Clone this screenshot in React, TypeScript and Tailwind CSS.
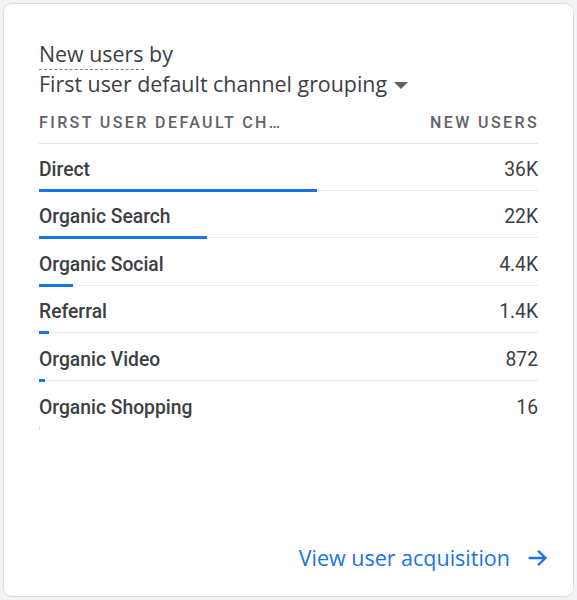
import React from "react";

const rows = [
  { name: "Direct", value: "36K", w: 278 },
  { name: "Organic Search", value: "22K", w: 168 },
  { name: "Organic Social", value: "4.4K", w: 34 },
  { name: "Referral", value: "1.4K", w: 10 },
  { name: "Organic Video", value: "872", w: 6 },
  { name: "Organic Shopping", value: "16", w: 1 },
];

const sans = { fontFamily: "'Open Sans', Roboto, sans-serif" };

export default function App() {
  return (
    <div className="w-[577px] h-[600px] bg-[#f1f3f4] p-[3px] box-border" style={{ fontFamily: "Roboto, 'Liberation Sans', sans-serif" }}>
      <div className="w-[571px] h-[594px] bg-white rounded-[9px] border border-[#dadce0] flex flex-col box-border">
        <div className="pl-[35px] pr-[35px] pt-[36px]">
          <div className="text-[21.4px] leading-[28px] text-[#3c4043]" style={sans}>
            <span className="border-b border-dashed border-[#80868b] pb-[1px]">New users</span> by
          </div>
          <div className="mt-[2px] flex items-center text-[21.4px] leading-[28px] text-[#3c4043]" style={sans}>
            <span>First user default channel grouping</span>
            <svg width="14" height="7" viewBox="0 0 14 7" className="ml-[7px] mt-[2px]">
              <path d="M0 0 L14 0 L7 7 Z" fill="#5f6368" />
            </svg>
          </div>
          <div className="mt-[15px] flex justify-between text-[16px] leading-[20px] font-medium tracking-[2.4px] text-[#5f6368] pb-[10px] border-b border-[#e0e0e0]">
            <span>FIRST USER DEFAULT CH…</span>
            <span className="mr-[-1px]">NEW USERS</span>
          </div>
          {rows.map((r, i) => (
            <div key={r.name} className="h-[47.6px] flex flex-col justify-end">
              <div className="flex justify-between items-center text-[19.3px] leading-[24px] text-[#3c4043] pb-[7px]">
                <span className="font-medium">{r.name}</span>
                <span>{r.value}</span>
              </div>
              <div className="relative h-[3px]">
                {i < rows.length - 1 && <div className="absolute left-0 right-0 top-[1px] h-px bg-[#e8eaed]" />}
                <div className={i < rows.length - 1 ? "absolute left-0 top-0 h-[3px] bg-[#1a73e8]" : "absolute left-0 top-0 h-[3px] bg-[#c6dafc]"} style={{ width: r.w }} />
              </div>
            </div>
          ))}
        </div>
        <div className="mt-auto flex justify-end items-center pr-[24px] pb-[24px]">
          <span className="text-[21.5px] leading-[28px] text-[#1a73e8]" style={sans}>View user acquisition</span>
          <svg width="22" height="22" viewBox="0 0 24 24" className="ml-[17px]">
            <path d="M3 12 H20 M13 5 L20 12 L13 19" stroke="#1a73e8" strokeWidth="2.6" fill="none" strokeLinecap="square" />
          </svg>
        </div>
      </div>
    </div>
  );
}
